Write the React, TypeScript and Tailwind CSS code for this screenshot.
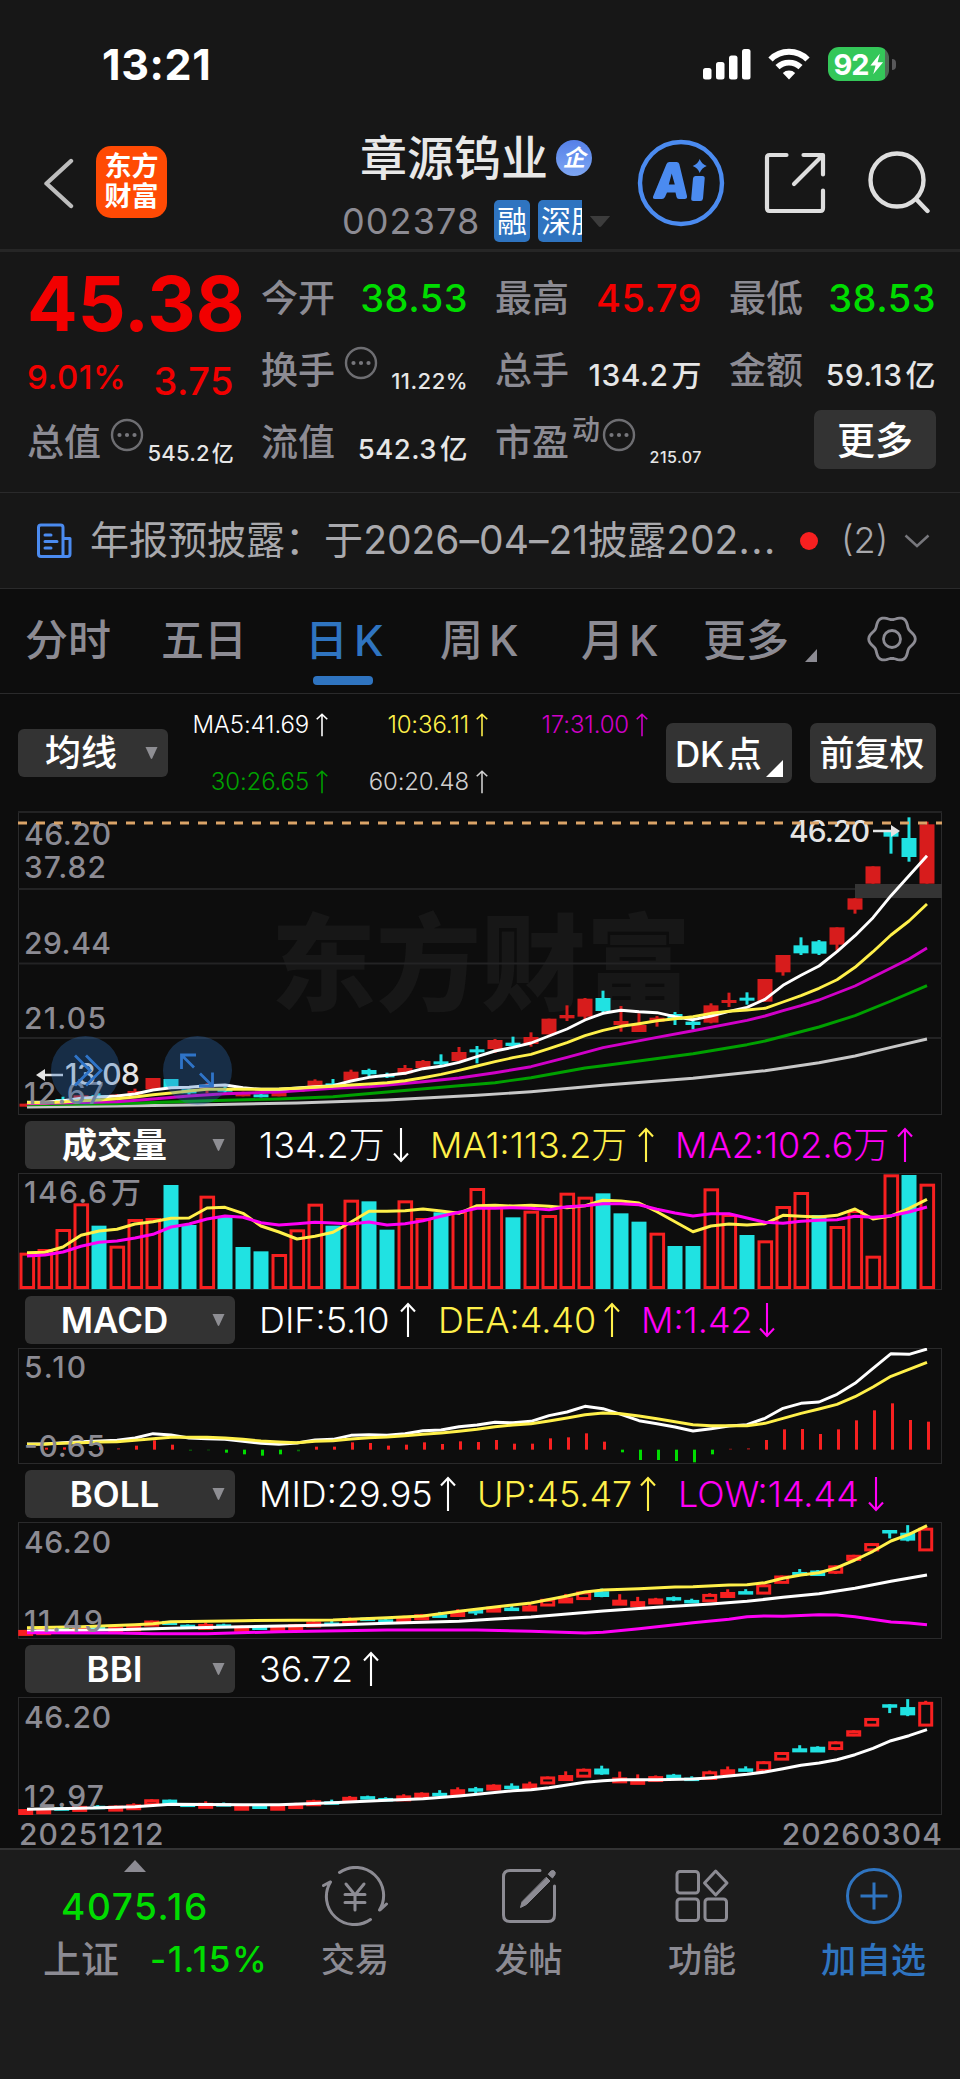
import React from "react";

/* ---------- chart data: [up, bodyTop, bodyBottom, high, low] in thirds of a pixel below the price origin ---------- */
type Candle = [number, number, number, number, number];

const candles: Candle[] = [
  [1, 911, 920, 911, 920], [1, 905, 913, 905, 913], [0, 897, 905, 890, 908], [1, 886, 896, 884, 898],
  [0, 885, 894, 880, 896], [1, 884, 892, 882, 894], [1, 873, 884, 866, 886], [1, 834, 868, 834, 868],
  [0, 837, 863, 837, 863], [0, 868, 880, 866, 884], [1, 862, 870, 850, 880], [0, 865, 875, 860, 878],
  [1, 877, 889, 875, 889], [0, 883, 892, 876, 892], [1, 877, 889, 877, 889], [1, 864, 876, 862, 876],
  [1, 842, 860, 838, 862], [0, 850, 858, 837, 860], [1, 815, 842, 809, 842], [0, 810, 823, 806, 830],
  [0, 824, 832, 818, 834], [1, 804, 820, 795, 825], [1, 783, 804, 780, 806], [0, 784, 793, 763, 796],
  [1, 756, 783, 741, 785], [0, 748, 757, 738, 790], [1, 720, 747, 717, 759], [0, 728, 738, 710, 741],
  [1, 711, 732, 697, 740], [1, 656, 703, 656, 703], [1, 645, 655, 616, 663], [1, 596, 650, 594, 657],
  [0, 594, 633, 572, 643], [1, 663, 675, 618, 695], [1, 675, 696, 640, 696], [1, 653, 665, 648, 680],
  [0, 642, 660, 636, 675], [0, 665, 675, 655, 688], [1, 616, 668, 610, 670], [1, 600, 609, 578, 621],
  [0, 593, 602, 577, 614], [1, 537, 605, 537, 605], [1, 465, 517, 465, 527], [0, 436, 460, 412, 465],
  [0, 424, 461, 420, 465], [1, 382, 434, 382, 452], [1, 295, 329, 295, 341], [1, 199, 251, 199, 251],
  [0, 92, 110, 92, 161], [0, 114, 171, 52, 185], [1, 73, 251, 65, 251],
];

const volumes = [
  428, 417, 357, 280, 347, 407, 327, 324, 225, 345, 257, 320, 411, 424, 432, 358, 281, 347, 269, 274, 359, 271, 324,
  307, 303, 234, 284, 322, 302, 315, 248, 260, 250, 310, 335, 368, 408, 408, 235, 312, 375, 391, 288, 246, 315, 348,
  300, 437, 193, 195, 221,
];
const volumeDown = [4, 8, 9, 11, 12, 13, 17, 19, 20, 23, 27, 32, 33, 34, 36, 37, 40, 44, 49];

const macdBars = [
  1019, 1013, 1012, 1014, 1012, 1014, 1007, 991, 1004, 1022, 1021, 1028, 1033, 1037, 1033, 1024, 1010, 1010, 997, 999,
  1007, 1004, 997, 1002, 994, 996, 990, 1001, 1001, 985, 982, 970, 995, 1027, 1050, 1050, 1053, 1057, 1033, 1016, 1014,
  990, 958, 957, 972, 958, 931, 901, 880, 930, 935,
];

const ma5 = [
  907, 907, 902, 895, 891, 888, 882, 870, 863, 862, 857, 855, 863, 868, 868, 864, 860, 857, 843, 832, 826, 820, 806,
  799, 787, 770, 753, 742, 729, 708, 687, 660, 640, 631, 635, 638, 650, 659, 648, 634, 622, 598, 556, 526, 498, 455,
  407, 353, 287, 227, 167,
];
const ma10 = [
  908, 908, 906, 902, 900, 896, 891, 884, 879, 873, 868, 868, 868, 868, 867, 865, 862, 859, 855, 852, 848, 842, 833,
  823, 811, 798, 785, 773, 763, 746, 728, 707, 691, 679, 671, 662, 656, 650, 640, 634, 630, 625, 606, 587, 565, 539,
  502, 455, 405, 363, 312,
];
const vma1 = [
  428, 427, 411, 376, 363, 358, 342, 335, 325, 324, 294, 292, 310, 348, 366, 387, 379, 367, 336, 304, 304, 302, 297,
  303, 310, 287, 286, 288, 286, 289, 293, 287, 271, 273, 279, 305, 335, 365, 348, 342, 345, 341, 316, 319, 321, 316,
  297, 327, 318, 295, 268,
];
const vma2 = [
  438, 435, 426, 409, 397, 393, 384, 373, 351, 342, 327, 318, 322, 338, 345, 341, 337, 339, 342, 336, 345, 341, 332,
  319, 307, 295, 295, 293, 295, 299, 290, 287, 281, 281, 284, 298, 309, 318, 311, 311, 324, 337, 340, 334, 331, 329,
  319, 322, 317, 306, 291,
];
const dif = [
  1002, 1002, 998, 995, 993, 991, 984, 971, 975, 984, 986, 988, 994, 1000, 1003, 999, 990, 988, 976, 974, 976, 971,
  962, 960, 950, 945, 937, 938, 934, 917, 906, 889, 896, 913, 932, 941, 951, 963, 956, 948, 944, 925, 895, 880, 876,
  853, 820, 775, 731, 733, 717,
];
const dea = [
  1003, 1002, 1000, 998, 996, 995, 991, 986, 982, 982, 982, 984, 988, 993, 996, 998, 994, 992, 987, 983, 981, 977, 973,
  969, 964, 958, 950, 945, 941, 933, 924, 914, 909, 911, 918, 926, 935, 944, 947, 947, 947, 940, 925, 910, 897, 883,
  860, 831, 799, 778, 757,
];

type Pt = [number, number];
const ma17: Pt[] = [[0, 911], [5, 905], [7, 897], [9, 888], [11, 881], [14, 876], [17, 865], [19, 860], [22, 845], [24, 834], [26, 818], [28, 800], [30, 772], [32, 743], [35, 712], [37, 692], [40, 661], [41, 648], [42, 632], [43, 617], [44, 600], [46, 558], [48, 504], [49, 477], [50, 444]];
const ma30: Pt[] = [[0, 914], [5, 911], [10, 902], [14, 897], [17, 890], [20, 876], [24, 857], [26, 848], [28, 833], [31, 804], [32, 797], [37, 761], [40, 734], [41, 723], [44, 681], [46, 647], [48, 603], [50, 557]];
const ma60: Pt[] = [[0, 921], [5, 918], [10, 914], [15, 909], [20, 900], [25, 886], [28, 875], [32, 856], [37, 835], [41, 812], [44, 788], [46, 768], [48, 742], [50, 717]];
const bollUp: Pt[] = [[0, 503], [3, 500], [6, 494], [7, 491], [8, 485], [12, 482], [17, 480], [20, 473], [22, 468], [24, 454], [26, 441], [28, 429], [30, 408], [31, 396], [32, 390], [34, 386], [36, 381], [37, 380], [39, 375], [40, 374], [41, 368], [42, 355], [43, 345], [44, 338], [45, 323], [46, 300], [47, 274], [48, 243], [49, 223], [50, 197]];
const bollMid: Pt[] = [[0, 513], [5, 509], [8, 505], [12, 500], [17, 495], [20, 490], [24, 484], [26, 477], [28, 471], [30, 462], [32, 453], [35, 442], [38, 432], [40, 424], [42, 412], [44, 401], [46, 385], [48, 364], [50, 345]];
const bollLow: Pt[] = [[0, 518], [5, 519], [7, 521], [10, 521], [14, 515], [20, 510], [25, 510], [28, 514], [31, 519], [32, 517], [34, 506], [37, 488], [39, 478], [40, 470], [41, 468], [42, 469], [44, 464], [45, 465], [46, 470], [48, 486], [49, 489], [50, 494]];
const bbi: Pt[] = [[0, 1048], [3, 1045], [6, 1040], [8, 1033], [12, 1034], [14, 1034], [17, 1028], [20, 1021], [22, 1016], [24, 1008], [25, 1003], [27, 992], [28, 989], [29, 983], [31, 967], [32, 962], [33, 959], [35, 959], [37, 957], [38, 953], [40, 943], [41, 936], [42, 926], [43, 916], [44, 909], [45, 899], [46, 884], [47, 865], [48, 842], [49, 827], [50, 809]];

const cx = (i: number) => 27 + 18 * i;
const dense = (a: number[]): Pt[] => a.map((v, i) => [i, v] as Pt);

function Line({ data, base, color, w = 2.9 }: { data: Pt[]; base: number; color: string; w?: number }) {
  const points = data.map(([i, v]) => `${cx(i)},${(base + v / 3).toFixed(1)}`).join(" ");
  return <polyline points={points} fill="none" stroke={color} strokeWidth={w} strokeLinejoin="round" />;
}

function SmallCandles({ top, scale }: { top: number; scale: number }) {
  return (
    <g>
      {candles.map(([up, t, b, h, l], i) => {
        const y = (v: number) => top + (800 + v / 3 - 817) * scale;
        const x = cx(i) - 1.3;
        const bt = y(t);
        const bh = Math.max(y(b) - bt + (up ? 2 : 1), up ? 6 : 3.5);
        const c = up ? "#f72020" : "#20e2e2";
        return (
          <g key={i}>
            <line x1={x} x2={x} y1={y(h)} y2={Math.max(y(l), bt + bh - 1)} stroke={c} strokeWidth={3} />
            {up ? (
              <rect x={x - 6} y={bt + 1.5} width={12} height={bh - 3} fill="#0d0d0d" stroke={c} strokeWidth={3} />
            ) : (
              <rect x={x - 7.5} y={bt} width={15} height={bh} fill={c} />
            )}
          </g>
        );
      })}
    </g>
  );
}

function Label({ x, y, children, color = "#8c8b93", w }: { x: number; y: number; children: string; color?: string; w?: number }) {
  return (
    <text x={x} y={y} fill={color} fontSize={30} fontWeight={500} textLength={w} className="font-[Inter,'Noto_Sans_CJK_SC',sans-serif]">
      {children}
    </text>
  );
}

function Panel({ y, h, children }: { y: number; h: number; children: React.ReactNode }) {
  return (
    <svg className="ml-[18px] block shrink-0" width={924} height={h} viewBox={`18 ${y} 924 ${h}`}>
      <rect x={18.5} y={y + 0.5} width={923} height={h - 1} fill="none" stroke="#2a2a2b" />
      {children}
    </svg>
  );
}

/* ---------- small pieces ---------- */
function Arrow({ down, small }: { down?: boolean; small?: boolean }) {
  return (
    <svg
      width={small ? 12 : 16}
      height={small ? 24 : 36}
      viewBox="0 0 16 36"
      preserveAspectRatio="none"
      fill="none"
      stroke="currentColor"
      strokeWidth={2.1}
      className={down ? "shrink-0 rotate-180" : "shrink-0"}
    >
      <path d="M8 35V2M1 9.5 8 2l7 7.5" />
    </svg>
  );
}

function Dots() {
  return (
    <svg width="34" height="34" viewBox="0 0 34 34" className="shrink-0">
      <circle cx="17" cy="17" r="15" fill="none" stroke="#6e6e72" strokeWidth="2.4" />
      <g fill="#77777c">
        <circle cx="9.5" cy="17" r="2.1" />
        <circle cx="17" cy="17" r="2.1" />
        <circle cx="24.5" cy="17" r="2.1" />
      </g>
    </svg>
  );
}

function Caret({ className }: { className: string }) {
  return (
    <svg viewBox="0 0 13 12" preserveAspectRatio="none" className={className} fill="currentColor">
      <path d="M.5 0h12L7.3 11.2q-.8 1.4-1.6 0Z" />
    </svg>
  );
}

function IndicatorRow({ name, children }: { name: string; children: React.ReactNode }) {
  return (
    <div className="flex h-[58px] shrink-0 items-start pt-[6px] pl-[25px] text-[36px] leading-none font-light">
      <div className="flex h-[48px] w-[210px] shrink-0 items-center rounded-[6px] bg-[#333333] pr-[10px] font-semibold text-white">
        <span className="flex-1 pr-[8px] text-center text-[35px]">{name}</span>
        <Caret className="h-[12px] w-[13px] text-[#8e8e93]" />
      </div>
      <div className="flex h-[48px] items-center">{children}</div>
    </div>
  );
}

function Reading({ text, box, color, down }: { text: string; box: string; color: string; down?: boolean }) {
  return (
    <div className={`flex shrink-0 items-center justify-between ${box} ${color}`}>
      <span className="whitespace-nowrap">{text}</span>
      <Arrow down={down} />
    </div>
  );
}

function MaItem({ text, color }: { text: string; color: string }) {
  return (
    <div className={`flex h-[24px] shrink-0 items-center justify-end gap-[7px] tracking-[-0.15px] whitespace-nowrap ${color}`}>
      <span>{text}</span>
      <Arrow small />
    </div>
  );
}

function StatusBar() {
  return (
    <div className="flex h-[125px] shrink-0 items-start justify-between pt-[43px] pr-[64px] pl-[102px]">
      <span className="text-[43px] leading-none font-bold tracking-[0.6px] text-white">13:21</span>
      <div className="flex items-center pt-[4px]">
        <svg width="50" height="32" viewBox="0 0 50 32" fill="#fff">
          <rect x="1" y="20" width="8.5" height="11.5" rx="2.5" />
          <rect x="14" y="14" width="8.5" height="17.5" rx="2.5" />
          <rect x="27" y="7.5" width="8.5" height="24" rx="2.5" />
          <rect x="40" y="1" width="8.5" height="30.5" rx="2.5" />
        </svg>
        <svg width="42" height="32" viewBox="0 0 42 32" className="ml-[16px]" fill="none" stroke="#fff" strokeWidth="6">
          <path d="M2.5 11.5a26 26 0 0 1 37 0" />
          <path d="M9.5 19.2a16.5 16.5 0 0 1 23 0" strokeWidth="5.8" />
          <path d="M21 31.5 14.8 25a9 9 0 0 1 12.4 0Z" fill="#fff" stroke="none" />
        </svg>
        <div className="ml-[18px] flex h-[34px] w-[61px] items-center justify-center rounded-[11px] bg-linear-to-r from-[#34c759] from-94% to-[#4f6b56] to-94% text-[29px] leading-none font-bold tracking-[-1px] text-white">
          92
          <svg width="15" height="24" viewBox="0 0 16 24" fill="#fff">
            <path d="M11.5 1 1.5 13.500h5.5L4.500 23 15 10H9.200Z" />
          </svg>
        </div>
        <div className="ml-[3px] h-[11px] w-[4px] rounded-r-full bg-[#58585a]" />
      </div>
    </div>
  );
}

function Header() {
  return (
    <div className="flex h-[124px] shrink-0 items-start">
      <svg className="mt-[33px] ml-[43px]" width="31" height="51" viewBox="0 0 31 51" fill="none" stroke="#bdbdbd" strokeWidth="4.4" strokeLinecap="round" strokeLinejoin="round">
        <path d="M28 3 3.500 25.500 28 48" />
      </svg>
      <div className="mt-[21px] ml-[22px] flex h-[72px] w-[71px] flex-col items-center justify-center rounded-[15px] bg-[#ff4a04] text-[27px] leading-[30px] font-semibold text-white">
        <span>东方</span>
        <span>财富</span>
      </div>
      <div className="ml-[175px] flex w-[270px] flex-col">
        <div className="mt-[9px] ml-[18px] flex h-[48px] items-center">
          <span className="mt-[-2px] text-[47px] leading-none font-medium whitespace-nowrap text-[#e8e8e8]">章源钨业</span>
          <span className="ml-[8px] flex size-[36px] items-center justify-center rounded-full bg-linear-to-b from-[#5580e8] to-[#7ea6f2] text-[23px] leading-none font-bold text-white italic">
            企
          </span>
        </div>
        <div className="mt-[18px] flex h-[42px] items-center">
          <span className="w-[152px] text-[36px] leading-none tracking-[1.1px] text-[#8c8b93]">002378</span>
          <span className="flex h-[42px] w-[36px] items-center justify-center rounded-[5px] bg-[#2f74c0] text-[30px] leading-none text-white">融</span>
          <span className="ml-[8px] flex h-[42px] w-[44px] items-center overflow-hidden rounded-l-[5px] bg-[#2f74c0] pl-[3px] text-[30px] leading-none whitespace-nowrap text-white">
            深股
          </span>
          <Caret className="ml-[7px] h-[11px] w-[22px] text-[#3c3c3c]" />
        </div>
      </div>
      <svg className="mt-[14px] ml-[25px] shrink-0" width="88" height="88" viewBox="0 0 88 88" fill="#4b8bf0">
        <circle cx="44" cy="44" r="41" fill="none" stroke="#4b8bf0" strokeWidth="4.400" />
        <path
          fillRule="evenodd"
          d="M29.500 25Q30.300 23 32.500 23H39.500Q41.700 23 42.300 25L50 57Q50.500 60 47.500 60H42Q40 60 39.500 58L38.500 53.500H30L28 58Q27 60 25 60H18Q15 60 16.300 57ZM34.700 34.500 31.800 45.500H37.800Z"
        />
        <path d="M58.500 37H65.500Q68 37 67.700 39.500L66 59.500Q65.700 62 63.200 62H56.500Q54 62 54.200 59.500L56 39.500Q56.200 37 58.500 37Z" />
        <path d="M62.700 20Q64.500 25 69.700 27 64.500 29 62.700 34 61 29 55.700 27 61 25 62.700 20Z" />
      </svg>
      <svg className="mt-[27px] ml-[39px] shrink-0" width="62" height="62" viewBox="0 0 62 62" fill="none" stroke="#dedede" strokeWidth="4.200" strokeLinecap="round" strokeLinejoin="round">
        <path d="M22.500 3H5.500Q3 3 3 5.500V56q0 3 2.500 3H56.500Q59 59 59 56V38.500M39.500 3H59V22.500M57.500 4.500 30 32" />
      </svg>
      <svg className="mt-[25px] ml-[42px] shrink-0" width="64" height="64" viewBox="0 0 64 64" fill="none" stroke="#dedede" strokeWidth="4.400" strokeLinecap="round">
        <circle cx="29" cy="30" r="26.500" />
        <path d="m49 50 10.500 11" />
      </svg>
    </div>
  );
}

function Cell({ label, children }: { label: string; children: React.ReactNode }) {
  return (
    <div className="flex h-[72px] items-center justify-between whitespace-nowrap">
      <span className="text-[37px] tracking-normal text-[#8c8b93]">{label}</span>
      {children}
    </div>
  );
}

function Quote() {
  return (
    <div className="grid h-[240px] shrink-0 grid-cols-[207px_207px_207px_207px] content-start gap-x-[27px] pt-[10px] pl-[27px] leading-none font-medium tracking-[0.03em] text-[#e6e6e6]">
      <div className="flex h-[72px] items-center text-[#f20000]">
        <span className="mt-[11px] text-[75px] font-bold tracking-[0px]">45.38</span>
      </div>
      <Cell label="今开">
        <span className="text-[38px] text-[#00dc00]">38.53</span>
      </Cell>
      <Cell label="最高">
        <span className="text-[38px] text-[#f20000]">45.79</span>
      </Cell>
      <Cell label="最低">
        <span className="text-[38px] text-[#00dc00]">38.53</span>
      </Cell>

      <div className="flex h-[72px] items-center justify-between text-[#f20000]">
        <span className="mt-[15px] text-[33px]">9.01%</span>
        <span className="mt-[22px] text-[38px]">3.75</span>
      </div>
      <div className="flex h-[72px] items-center whitespace-nowrap">
        <span className="text-[37px] tracking-normal text-[#8c8b93]">换手</span>
        <span className="mb-[14px] ml-[9px]"><Dots /></span>
        <span className="mt-[22px] ml-auto text-[22px]">11.22%</span>
      </div>
      <Cell label="总手">
        <span className="mt-[10px] text-[30px]">134.2<span className="ml-[3px]">万</span></span>
      </Cell>
      <Cell label="金额">
        <span className="mt-[10px] text-[30px]">59.13<span className="ml-[3px]">亿</span></span>
      </Cell>

      <div className="flex h-[72px] items-center whitespace-nowrap">
        <span className="text-[37px] tracking-normal text-[#8c8b93]">总值</span>
        <span className="mb-[15px] ml-[9px]"><Dots /></span>
        <span className="mt-[22px] ml-auto text-[22px] tracking-[0.2px]">545.2<span className="ml-[2px]">亿</span></span>
      </div>
      <Cell label="流值">
        <span className="mt-[15px] text-[27.5px]">542.3<span className="ml-[3px]">亿</span></span>
      </Cell>
      <div className="flex h-[72px] items-center whitespace-nowrap">
        <span className="text-[37px] tracking-normal text-[#8c8b93]">市盈</span>
        <span className="mb-[24px] ml-[3px] text-[28px] tracking-normal text-[#8c8b93]">动</span>
        <span className="mb-[15px] ml-[2px]"><Dots /></span>
        <span className="mt-[29px] ml-auto text-[16px]">215.07</span>
      </div>
      <div className="flex h-[68px] items-center justify-end">
        <div className="mt-[-1px] flex h-[59px] w-[122px] items-center justify-center rounded-[7px] bg-[#333333] text-[38px] tracking-normal text-white">更多</div>
      </div>
    </div>
  );
}

function News() {
  return (
    <div className="flex h-[97px] shrink-0 items-center border-y border-[#2a2a2b] pl-[36px] text-[39px] leading-none font-normal text-[#a9a9ad]">
      <svg width="36" height="36" viewBox="0 0 36 36" fill="none" stroke="#4b8bf0" strokeWidth="3" strokeLinejoin="round" strokeLinecap="round">
        <path d="M27 33.500V4.500Q27 2 24.500 2H5Q2.500 2 2.500 4.500V31q0 2.500 2.500 2.500H31.500Q34 33.500 34 31V15.500H27M9 12h6M9 18.500h12M9 25h6" />
      </svg>
      <span className="mt-[-2px] ml-[18px] w-[691px] tracking-[0.02px] whitespace-nowrap">
        年报预披露：于2026–04–21披露202<span className="tracking-[1.5px]">...</span>
      </span>
      <span className="ml-[19px] size-[18px] rounded-full bg-[#f72020]" />
      <span className="mt-[-2px] ml-[23px] w-[51px] text-[36px] font-light">(2)</span>
      <svg className="ml-[12px]" width="26" height="14" viewBox="0 0 26 14" fill="none" stroke="#77777c" strokeWidth="2.500">
        <path d="m1.500 1.500 11.500 10.500L24.500 1.500" />
      </svg>
    </div>
  );
}

/* six-lobed cog outline */
const gear =
  Array.from({ length: 72 }, (_, i) => {
    const a = (i * Math.PI) / 36;
    const r = 21.3 + 2 * Math.cos(6 * a);
    return `${i ? "L" : "M"}${(r * Math.cos(a)).toFixed(2)} ${(r * Math.sin(a)).toFixed(2)}`;
  }).join("") + "Z";

function Tabs() {
  return (
    <div className="flex h-[105px] shrink-0 items-start border-b border-[#2a2a2b] pt-[30px] pl-[25px] text-[43px] leading-none font-medium whitespace-nowrap text-[#8c8b93]">
      <span className="w-[136px]">分时</span>
      <span className="w-[144px]">五日</span>
      <div className="w-[135px] text-[#2f74c0]">
        <span>日<span className="ml-[6px]">K</span></span>
        <div className="mt-[14px] ml-[8px] h-[9px] w-[60px] rounded-[4px] bg-[#2f74c0]" />
      </div>
      <span className="w-[141px]">周<span className="ml-[6px]">K</span></span>
      <span className="w-[122px]">月<span className="ml-[5px]">K</span></span>
      <span className="w-[102px]">更多</span>
      <svg className="mt-[30px]" width="12" height="13" viewBox="0 0 12 13" fill="#8c8b93"><path d="M12 0V13H0Z" /></svg>
      <svg className="mt-[-5px] ml-[49px]" width="52" height="50" viewBox="-26 -25 52 50" fill="none" stroke="#8c8b93" strokeWidth="2.800" strokeLinejoin="round">
        <circle r="8.500" />
        <path d={gear} />
      </svg>
    </div>
  );
}

function Toolbar() {
  return (
    <div className="flex h-[117px] shrink-0 items-start text-[24px] leading-none font-light text-white">
      <div className="mt-[35px] ml-[18px] flex h-[48px] w-[150px] shrink-0 items-center rounded-[6px] bg-[#333333] pr-[10px] pl-[27px] text-[36px] font-medium">
        <span className="flex-1">均线</span>
        <Caret className="h-[12px] w-[13px] text-[#8e8e93]" />
      </div>
      <div className="mt-[19px] grid shrink-0 grid-cols-[160px_160px_160px] gap-y-[33px]">
        <MaItem text="MA5:41.69" color="text-white" />
        <MaItem text="10:36.11" color="text-[#fff04a]" />
        <MaItem text="17:31.00" color="text-[#d000c8]" />
        <MaItem text="30:26.65" color="text-[#00a000]" />
        <MaItem text="60:20.48" color="text-[#cfcfcf]" />
      </div>
      <div className="mt-[29px] ml-[18px] flex h-[60px] w-[126px] shrink-0 items-center rounded-[7px] bg-[#333333] pl-[9px] text-[35px] font-medium">
        <span className="mt-[2px] w-[91px] tracking-[-0.300px] whitespace-nowrap">DK<span className="ml-[3px]">点</span></span>
        <svg className="mt-[31px]" width="17" height="17" viewBox="0 0 17 17" fill="#fff"><path d="M17 0V17H0Z" /></svg>
      </div>
      <div className="mt-[29px] ml-[18px] flex h-[60px] w-[126px] shrink-0 items-center justify-center rounded-[7px] bg-[#333333] pr-[2px] text-[35px] font-medium whitespace-nowrap">前复权</div>
    </div>
  );
}

function PriceChart() {
  return (
    <Panel y={811} h={304}>
      <text x={271} y={1002} fontSize={105} fontWeight={900} fill="#171717" className="font-['Noto_Sans_CJK_SC',sans-serif]">东方财富</text>
      <path d="M18 812h924M18 889h924M18 963.500h924M18 1038h924" stroke="#232324" strokeWidth="2" />
      <rect x={855} y={884} width={87} height={14} fill="#343434" />
      {candles.map(([up, t, b, h, l], i) => {
        const c = up ? "#d71c1c" : "#20e2e2";
        return (
          <g key={i} fill={c}>
            <rect x={cx(i) - 1.5} y={800 + h / 3} width={3} height={(l - h) / 3} />
            <rect x={cx(i) - 7.5} y={800 + t / 3} width={15} height={(b - t) / 3} />
          </g>
        );
      })}
      <Line data={ma60} base={800} color="#c8c8c8" />
      <Line data={ma30} base={800} color="#00a000" />
      <Line data={ma17} base={800} color="#d000c8" />
      <Line data={dense(ma5)} base={800} color="#ffffff" />
      <Line data={dense(ma10)} base={800} color="#fff04a" />
      <Label x={24} y={845} w={87}>46.20</Label>
      <Label x={24} y={878} w={82}>37.82</Label>
      <Label x={24} y={954} w={87}>29.44</Label>
      <Label x={24} y={1029} w={82}>21.05</Label>
      <Label x={24} y={1104} w={80}>12.67</Label>
      <Label x={789} y={842} w={81} color="#e4e4e4">46.20</Label>
      <path d="M873 831h20" stroke="#e4e4e4" strokeWidth="2.500" />
      <path d="M891 825v12l9-6Z" fill="#e4e4e4" />
      <Label x={65} y={1085} w={75} color="#e4e4e4">13.08</Label>
      <path d="M44 1075h19" stroke="#e4e4e4" strokeWidth="2.500" />
      <path d="M45 1069v12l-9-6Z" fill="#e4e4e4" />
      <path d="M18 823h924" stroke="#dba468" strokeWidth="3" strokeDasharray="9 9" />
      <g fill="#2f74c0" fillOpacity=".32">
        <circle cx="85.500" cy="1070.500" r="34.500" />
        <circle cx="197.500" cy="1070.500" r="34.500" />
      </g>
      <g fill="none" stroke="#2f74c8" strokeWidth="2.800">
        <path d="m75 1055.500 15 15-15 15M86 1055.500l15 15-15 15" />
        <path d="M181.500 1069v-14H196M182 1055.500l12 12M212.500 1072.500V1086H199M212 1085.500l-12-12" />
      </g>
    </Panel>
  );
}

function Footer() {
  const item = "flex flex-col items-center text-[34px] leading-none font-medium text-[#8c8b93]";
  return (
    <div className="flex h-[231px] shrink-0 items-start border-t-2 border-[#333334] bg-[#1c1c1c] text-[#8c8b93]">
      <div className="flex w-[270px] shrink-0 flex-col leading-none font-medium">
        <svg className="mt-[10px] ml-[124px]" width="22" height="12" viewBox="0 0 22 12" fill="#8c8b93"><path d="M11 0 22 12H0Z" /></svg>
        <span className="mt-[16px] ml-[61px] text-[37px] tracking-[1.600px] text-[#00dc00]">4075.16</span>
        <div className="mt-[15px] ml-[43px] flex items-center whitespace-nowrap">
          <span className="text-[38px]">上证</span>
          <span className="ml-[31px] text-[35px] tracking-[1.500px] text-[#00dc00]">-1.15%</span>
        </div>
      </div>
      <div className={`${item} mt-[16px] w-[170px]`}>
        <svg width="68" height="60" viewBox="-34 -30 68 60" fill="none" stroke="#8c8b93" strokeWidth="3" strokeLinecap="round">
          <path d="M-15.500-23.500A28 28 0 0 1 24.500 14M25 14l6.500-6M15.500 23.500A28 28 0 0 1-24.500-14M-25-14l-6.500 3.500" />
          <path d="M-9-12 0-1 9-12M0-1V14M-10-1.500H10M-10 6.500H10" />
        </svg>
        <span className="mt-[17px]">交易</span>
      </div>
      <div className={`${item} mt-[16px] w-[177px]`}>
        <svg width="60" height="60" viewBox="0 0 60 60" fill="none" stroke="#8c8b93" strokeWidth="3" strokeLinecap="round" strokeLinejoin="round">
          <path d="M41 4.500H11Q4.500 4.500 4.500 11V49Q4.500 55.500 11 55.500H49Q55.500 55.500 55.500 49V20" />
          <path d="M50.500 6.500Q52 4 54.500 4.500 57 5.500 56 8.500L53.500 12 49.500 8.500ZM47.500 11.500 51 15 27.500 38.500 21.500 41.500 23 36Z" fill="#8c8b93" strokeWidth="1" />
        </svg>
        <span className="mt-[17px]">发帖</span>
      </div>
      <div className={`${item} mt-[16px] w-[170px]`}>
        <svg width="60" height="60" viewBox="0 0 60 60" fill="none" stroke="#8c8b93" strokeWidth="3" strokeLinejoin="round">
          <rect x="5" y="5.500" width="21.500" height="21.500" rx="3" />
          <rect x="5" y="33" width="21.500" height="21.500" rx="3" />
          <rect x="33" y="33" width="21.500" height="21.500" rx="3" />
          <path d="M43.700 5 55 17 43.700 29 32.500 17Z" />
        </svg>
        <span className="mt-[17px]">功能</span>
      </div>
      <div className={`${item} mt-[16px] w-[173px] text-[#2f74c0]`}>
        <svg width="60" height="60" viewBox="-30 -30 60 60" fill="none" stroke="#2f74c0" strokeWidth="3">
          <circle r="26.500" />
          <path d="M-13.500 0H13.500M0-13.500V13.500" />
        </svg>
        <span className="mt-[17px] text-[35px] text-[#2f74c0]">加自选</span>
      </div>
    </div>
  );
}

export default function App() {
  return (
    <div className="flex h-[2079px] w-[960px] flex-col overflow-hidden bg-[#0d0d0d] font-[Inter,'Noto_Sans_CJK_SC',sans-serif]">
      <div className="flex shrink-0 flex-col bg-[#171717]">
        <StatusBar />
        <Header />
        <div className="h-[3px] bg-[#262626]" />
        <Quote />
        <News />
      </div>
      <Tabs />
      <Toolbar />
      <PriceChart />

      <IndicatorRow name="成交量">
        <Reading text="134.2万" box="ml-[24px] w-[150px]" color="text-white" down />
        <Reading text="MA1:113.2万" box="ml-[21px] w-[224px]" color="text-[#fff04a]" />
        <Reading text="MA2:102.6万" box="ml-[21px] w-[238px]" color="text-[#ff00f5]" />
      </IndicatorRow>
      <Panel y={1173} h={117}>
        {volumes.map((v, i) => {
          const y = 1110 + v / 3;
          return volumeDown.includes(i) ? (
            <rect key={i} x={cx(i) - 7.5} y={y} width={15} height={1289 - y} fill="#20e2e2" />
          ) : (
            <rect key={i} x={cx(i) - 6} y={y + 1.5} width={12.6} height={1287.5 - y - 1.5} fill="none" stroke="#f72020" strokeWidth={3} />
          );
        })}
        <Label x={24} y={1203} w={83}>146.6</Label>
        <Label x={111} y={1203}>万</Label>
        <Line data={dense(vma1)} base={1110} color="#fff04a" w={3} />
        <Line data={dense(vma2)} base={1110} color="#ff00f5" w={3} />
      </Panel>

      <IndicatorRow name="MACD">
        <Reading text="DIF:5.10" box="ml-[24px] w-[157px]" color="text-white" />
        <Reading text="DEA:4.40" box="ml-[22px] w-[182px]" color="text-[#fff04a]" />
        <Reading text="M:1.42" box="ml-[21px] w-[134px]" color="text-[#ff00f5]" down />
      </IndicatorRow>
      <Panel y={1348} h={116}>
        {macdBars.map((v, i) => (
          <rect
            key={i}
            x={cx(i)}
            y={1110 + Math.min(v, 1019) / 3}
            width={3}
            height={Math.abs(v - 1019) / 3}
            fill={v > 1019 ? "#00dc00" : "#f72020"}
            opacity={Math.abs(v - 1019) < 6 ? 0.5 : 1}
          />
        ))}
        <Line data={dense(dif)} base={1110} color="#ffffff" />
        <Line data={dense(dea)} base={1110} color="#fff04a" />
        <Label x={24} y={1378} w={62}>5.10</Label>
        <Label x={24} y={1457} w={81}>-0.65</Label>
      </Panel>

      <IndicatorRow name="BOLL">
        <Reading text="MID:29.95" box="ml-[24px] w-[197px]" color="text-white" />
        <Reading text="UP:45.47" box="ml-[21px] w-[179px]" color="text-[#fff04a]" />
        <Reading text="LOW:14.44" box="ml-[22px] w-[206px]" color="text-[#ff00f5]" down />
      </IndicatorRow>
      <Panel y={1522} h={117}>
        <SmallCandles top={1525} scale={0.366} />
        <Line data={bollMid} base={1460} color="#ffffff" w={3} />
        <Line data={bollUp} base={1460} color="#fff04a" w={3} />
        <Line data={bollLow} base={1460} color="#ff00f5" w={3} />
        <Label x={24} y={1553} w={87}>46.20</Label>
        <Label x={24} y={1632} w={79}>11.49</Label>
      </Panel>

      <IndicatorRow name="BBI">
        <Reading text="36.72" box="ml-[24px] w-[120px]" color="text-white" />
      </IndicatorRow>
      <Panel y={1697} h={118}>
        <SmallCandles top={1699} scale={0.384} />
        <Line data={bbi} base={1460} color="#ffffff" w={3} />
        <Label x={24} y={1728} w={87}>46.20</Label>
        <Label x={24} y={1807} w={80}>12.97</Label>
      </Panel>
      <div className="flex h-[33px] shrink-0 items-center justify-between pt-[4px] pr-[17px] pl-[19px] text-[30px] leading-none font-medium tracking-[1.100px] text-[#8c8b93]">
        <span>20251212</span>
        <span>20260304</span>
      </div>
      <Footer />
    </div>
  );
}
